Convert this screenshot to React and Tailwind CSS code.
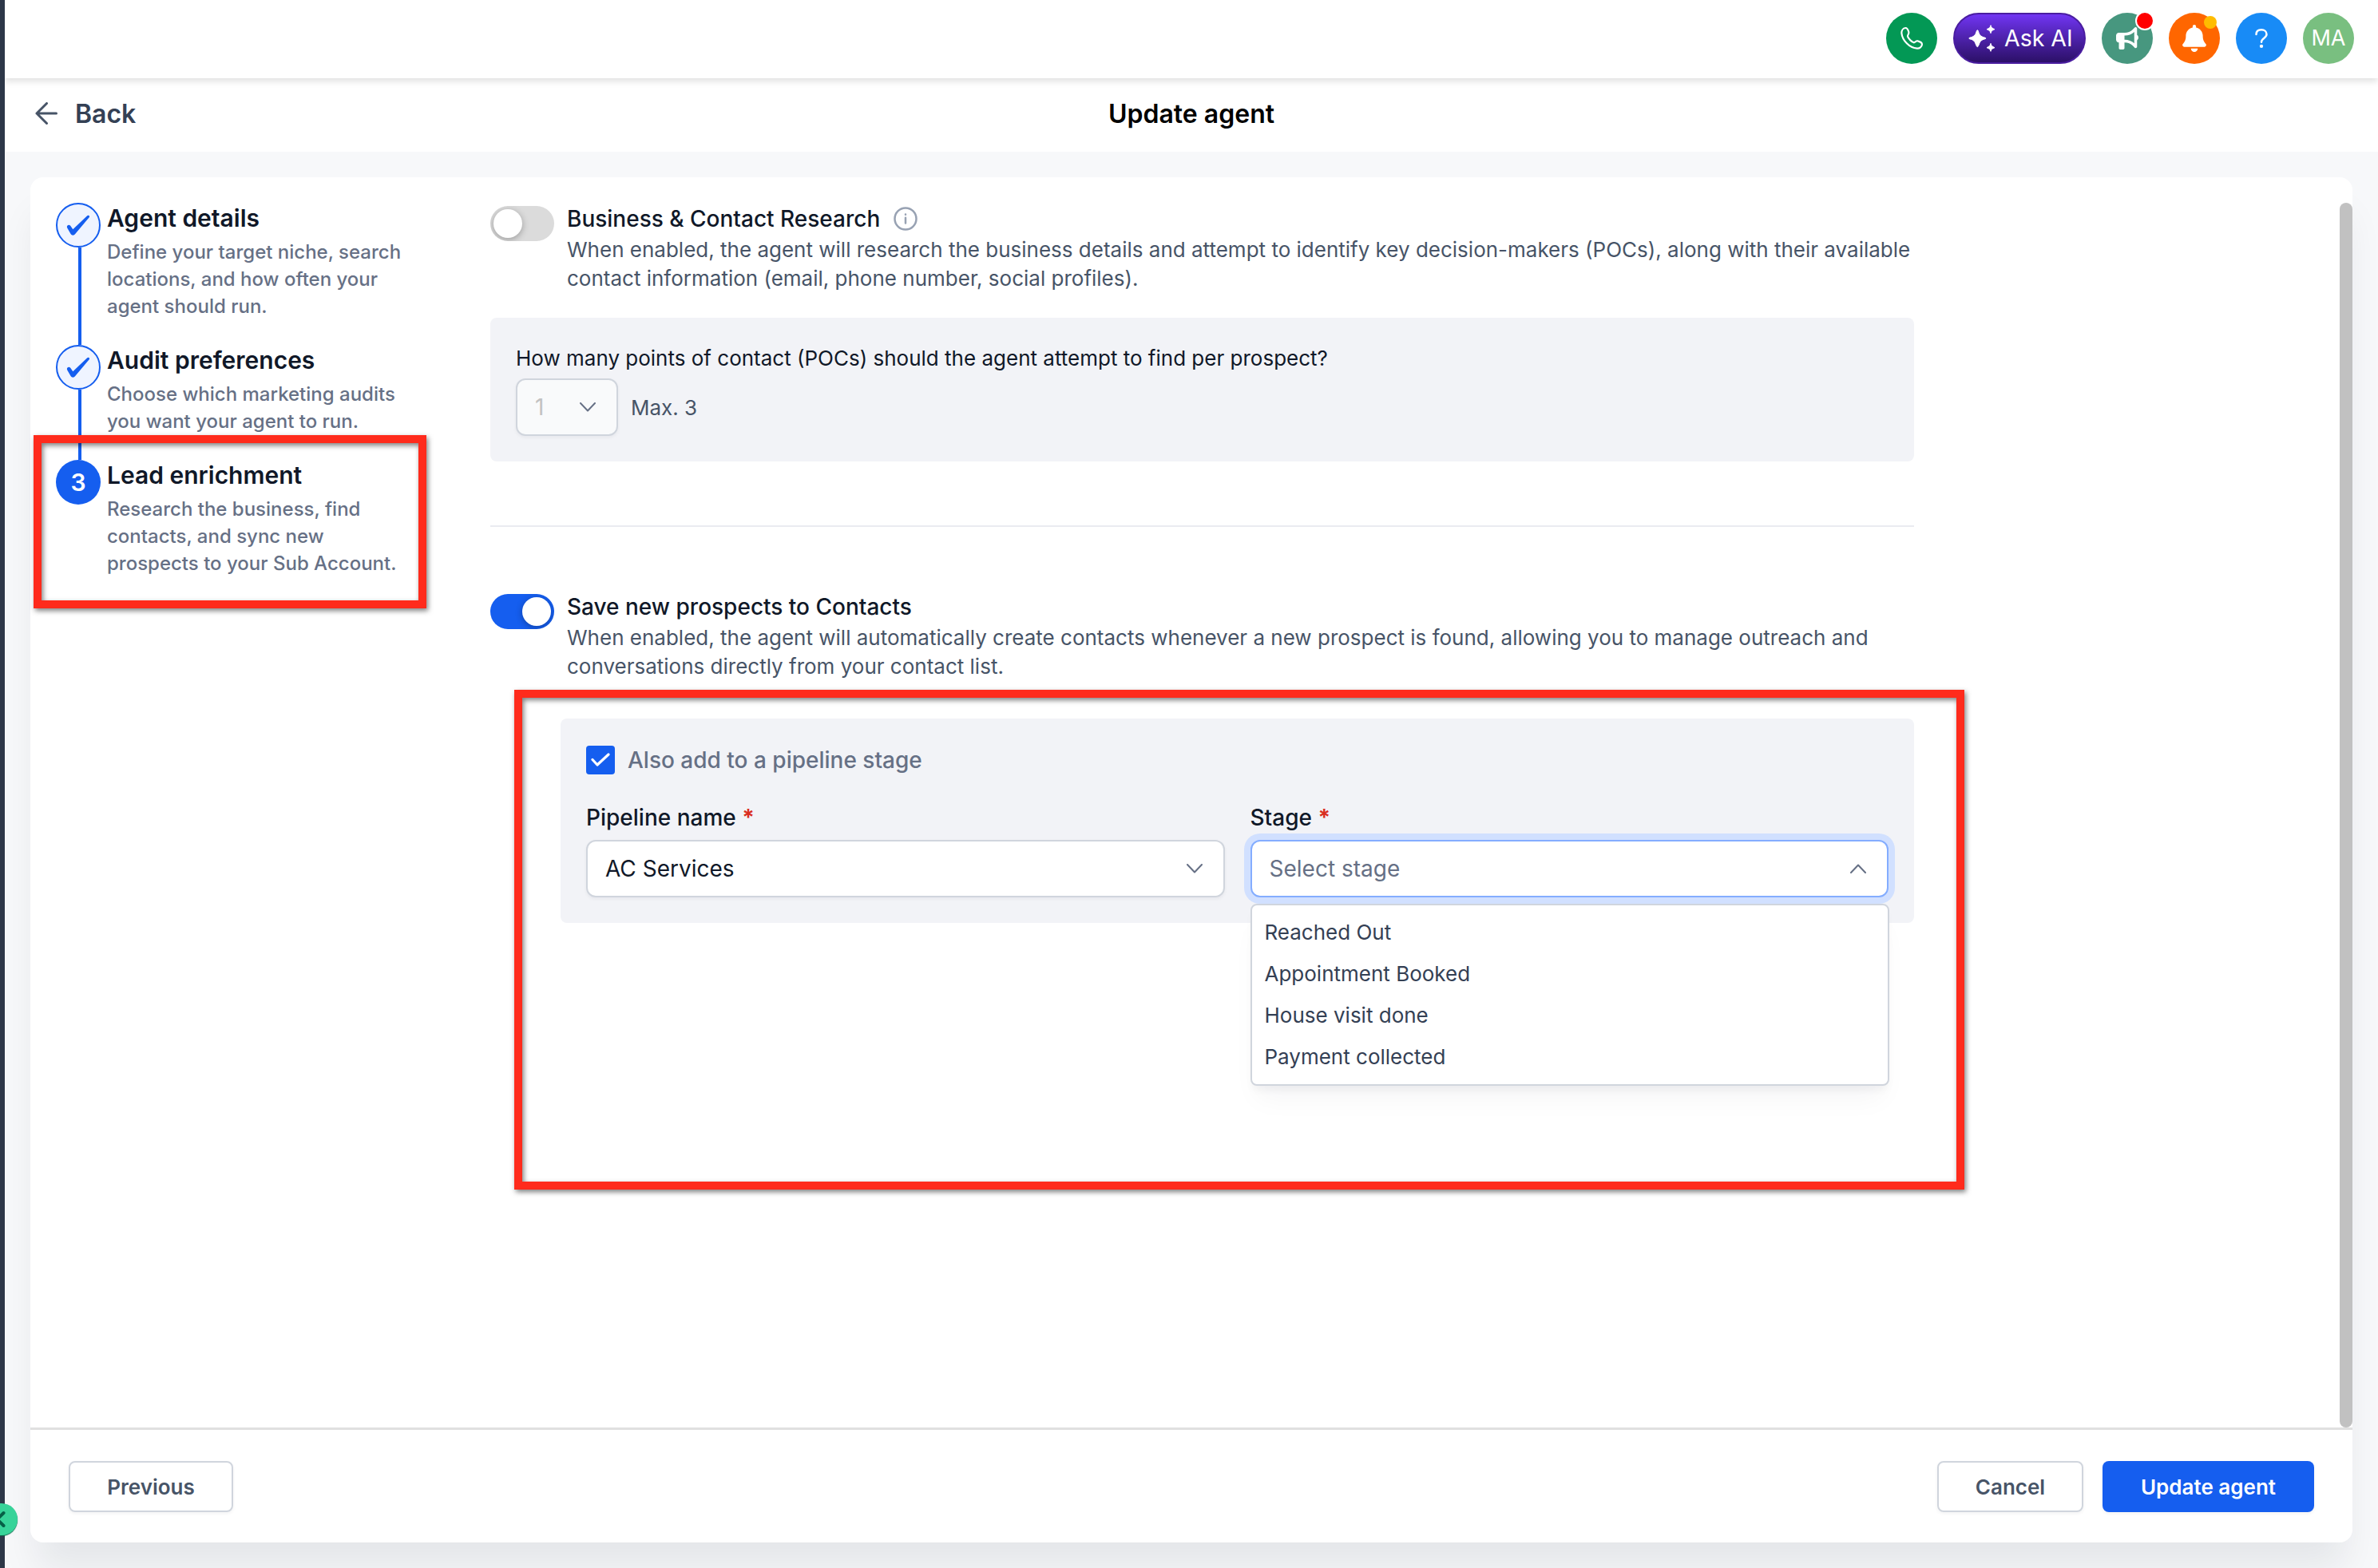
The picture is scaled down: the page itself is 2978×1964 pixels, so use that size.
import { useState } from 'react';
import { FaBell, FaBullhorn } from 'react-icons/fa6';

const steps = [
    {
        title: 'Agent details',
        description: 'Define your target niche, search locations, and how often your agent should run.',
    },
    {
        title: 'Audit preferences',
        description: 'Choose which marketing audits you want your agent to run.',
    },
    {
        title: 'Lead enrichment',
        description: 'Research the business, find contacts, and sync new prospects to your Sub Account.',
    },
];

const stages = ['Reached Out', 'Appointment Booked', 'House visit done', 'Payment collected'];

const PhoneIcon = () => (
    <svg viewBox="36 48 192 192" className="size-16" fill="none" stroke="white" strokeWidth="6.5" strokeLinejoin="round">
        <path d="M108 105C100 106 94 114 94 124C97 152 124 180 152 182C162 183 170 176 171 167C171 160 163 156 155 154C148 152 146 160 140 160C133 158 120 146 117 137C116 131 123 128 121 120C118 110 114 104 108 105Z" />
    </svg>
);

const SparklesIcon = () => (
    <svg viewBox="0 0 102 102" className="h-[34px] w-[34px]" fill="white" stroke="white" strokeWidth="3" strokeLinejoin="round">
        <path d="M34 20C36 20 37 23 38 27C41 37 44 41 54 46C60 48 66 49 66 51C66 53 60 54 54 56C44 61 43 66 39 76C37 81 36 83 34 83C32 83 31 81 29 76C25 66 24 61 14 56C8 54 2 53 2 51C2 49 8 48 14 46C24 41 27 37 30 27C31 23 32 20 34 20Z" />
        <path d="M84 2C85 9 90 14 99 17C90 20 85 24 84 32C83 24 78 20 69 17C78 14 83 9 84 2Z" />
        <path d="M84 70C85 78 90 82 99 86C90 89 85 93 84 100C83 93 78 89 69 86C78 82 83 78 84 70Z" />
    </svg>
);

const QuestionIcon = () => (
    <svg viewBox="0 0 48 72" className="h-6 w-4" fill="none" stroke="white" strokeWidth="7.5" strokeLinecap="round">
        <path d="M4.500 21C4.500 10 12.500 3.800 24 3.800C35.500 3.800 43.500 10.500 43.500 21C43.500 35 24 35 24 50" />
        <circle cx="24" cy="65.500" r="6.500" fill="white" stroke="none" />
    </svg>
);

const Chevron = ({ up }) => (
    <svg viewBox="0 0 20 12" className={up ? 'h-3 w-5 rotate-180' : 'h-3 w-5'} fill="none" stroke="#667085" strokeWidth="2" strokeLinecap="round" strokeLinejoin="round">
        <path d="M1 1L10 10.500L19 1" />
    </svg>
);

const Toggle = ({ on, onClick }) => (
    <button
        type="button"
        onClick={onClick}
        className={`flex h-11 w-20 shrink-0 items-center overflow-hidden rounded-full p-1 ${on ? 'justify-end bg-[#155eef]' : 'justify-start bg-[#dbdbdb]'}`}
    >
        <span className="size-9 rounded-full bg-white shadow-[0_2px_8px_rgba(0,0,0,0.3)]" />
    </button>
);

const TopBar = () => (
    <header className="relative z-10 flex h-[98px] shrink-0 items-start justify-end gap-5 bg-white pt-4 pr-[30px] shadow-[0_4px_8px_rgba(0,0,0,0.12)]">
        <div className="size-16 rounded-full bg-[#039855]">
            <PhoneIcon />
        </div>
        <div className="flex h-16 w-[166px] items-center rounded-full border-2 border-[#4a1da0] bg-gradient-to-b from-[#7135f3] to-[#2c1068] pl-[17px] text-[28.5px] text-white">
            <SparklesIcon />
            <span className="ml-[11px] whitespace-nowrap">Ask AI</span>
        </div>
        <div className="relative flex size-16 items-center justify-center rounded-full bg-[#47977f] text-white">
            <FaBullhorn size={28} />
            <span className="absolute top-0 right-0 size-5 rounded-full bg-[#ff0000] ring-2 ring-white" />
        </div>
        <div className="relative flex size-16 items-center justify-center rounded-full bg-[#ff6600] text-white">
            <FaBell size={34} />
            <span className="absolute top-1 right-1 size-4 rounded-full bg-[#ffbc00]" />
        </div>
        <div className="flex size-16 items-center justify-center rounded-full bg-[#188bf6]">
            <QuestionIcon />
        </div>
        <div className="flex size-16 items-center justify-center rounded-full bg-[#79bf80] text-[27px] text-white">MA</div>
    </header>
);

const StepMarker = ({ done, number }) => {
    if (!done) {
        return (
            <div className="flex size-14 items-center justify-center rounded-full bg-[#155eef] text-[30px] font-semibold text-white">
                {number}
            </div>
        );
    }
    return (
        <div className="flex size-14 items-center justify-center rounded-full border-2 border-[#155eef] bg-[#eff4ff]">
            <svg viewBox="0 0 30 26" className="h-[26px] w-[30px]" fill="#155eef">
                <path d="M26.200 1.300C27.400 -0.100 29.800 1.300 28.900 3L11 24.300C9.900 26.200 6.700 26.200 5.700 24.300L1.200 16.400C-0.200 13.600 3.200 11.600 5.200 13.800L8.300 18.200Z" />
            </svg>
        </div>
    );
};

const Stepper = ({ current }) => (
    <div className="flex w-[544px] shrink-0 flex-col">
        {steps.map((step, i) => (
            <div key={step.title} className="relative flex gap-2">
                <div className="flex w-14 flex-col items-center">
                    <StepMarker done={i < current} number={i + 1} />
                    {i < steps.length - 1 && <div className="ml-1 w-1 grow bg-[#155eef]" />}
                </div>
                <div className="w-[374px] pb-[31px]">
                    <h3 className="text-[30px] leading-[38px] font-semibold text-[#101828]">{step.title}</h3>
                    <p className="mt-[7px] text-2xl leading-[34px] font-medium text-[#667085]">{step.description}</p>
                </div>
                {i === current && (
                    <div className="absolute -top-[31px] -left-7 h-[217px] w-[492px] border-[10px] border-[#ff2b1c] drop-shadow-[2px_3px_3px_rgba(0,0,0,0.5)]" />
                )}
            </div>
        ))}
    </div>
);

const SettingRow = ({ on, onToggle, title, info, children }) => (
    <div className="flex items-start gap-4">
        <Toggle on={on} onClick={onToggle} />
        <div className="-mt-0.5">
            <div className="flex h-9 items-center gap-[17px] text-[28px] leading-9 font-medium text-[#101828]">
                {title}
                {info && (
                    <svg viewBox="0 0 30 30" className="size-[30px]" fill="none" stroke="#98a2b3" strokeWidth="2.500" strokeLinecap="round">
                        <circle cx="15" cy="15" r="13.500" />
                        <path d="M15 13.800V20.500M15 9.600V9.700" />
                    </svg>
                )}
            </div>
            <p className="mt-[3px] text-[26px] leading-9 text-[#475467]">{children}</p>
        </div>
    </div>
);

const FieldLabel = ({ children }) => (
    <label className="block text-[28px] leading-10 font-medium text-[#101828]">
        {children} <span className="font-bold text-[#d92d20]">*</span>
    </label>
);

const App = () => {
    const [research, setResearch] = useState(false);
    const [saveContacts, setSaveContacts] = useState(true);

    return (
        <div className="flex h-[1964px] w-[2978px] overflow-hidden bg-[#f7f8fa] font-[Inter,sans-serif]">
            {/* Collapsed sidebar */}
            <aside className="relative z-20 w-1.5 shrink-0 bg-[#2d3748]">
                <div className="absolute top-[1883px] -left-[18px] size-10 rounded-full bg-[#37d399] shadow-[0_1px_1px_#0b6b4c]">
                    <svg viewBox="0 0 40 40" className="size-10" fill="none" stroke="#065f46" strokeWidth="4" strokeLinecap="round" strokeLinejoin="round">
                        <path d="M22.500 12L14.500 20L22.500 28" />
                    </svg>
                </div>
            </aside>

            <div className="flex grow flex-col">
                <TopBar />

                <div className="grid h-[92px] shrink-0 grid-cols-3 items-center bg-white pb-0.5 text-[32px] font-semibold">
                    <button type="button" className="flex items-center gap-[22px] pl-[38px] text-[#344054]">
                        <svg viewBox="0 0 28 28" className="size-7 -translate-y-px" fill="none" stroke="#475467" strokeWidth="3" strokeLinecap="round" strokeLinejoin="round">
                            <path d="M26.500 14H2M14.500 1.500L2 14L14.500 26.500" />
                        </svg>
                        Back
                    </button>
                    <h1 className="text-center text-black">Update agent</h1>
                </div>

                <main className="mx-8 mt-8 flex h-[1710px] flex-col rounded-2xl bg-white shadow-[0_40px_48px_-8px_rgba(16,24,40,0.08)]">
                    <div className="flex grow pt-8 pl-8">
                        <Stepper current={2} />

                        <section className="w-[1783px] pt-1">
                            <SettingRow on={research} onToggle={() => setResearch(!research)} title="Business & Contact Research" info>
                                When enabled, the agent will research the business details and attempt to identify key decision-makers (POCs), along with their available
                                <br />
                                contact information (email, phone number, social profiles).
                            </SettingRow>

                            <div className="mt-[31px] h-[180px] rounded-lg bg-[#f2f3f7] px-8 pt-8">
                                <p className="text-[26px] leading-[38px] text-[#101828]">
                                    How many points of contact (POCs) should the agent attempt to find per prospect?
                                </p>
                                <div className="mt-1.5 flex items-center gap-4">
                                    <div className="flex h-[72px] w-32 items-center justify-between rounded-xl border-2 border-[#d0d5dd] bg-[#f9fafb] pr-[26px] pl-[22px] text-[28px] text-[#c2c2c2] shadow-[0_2px_4px_rgba(16,24,40,0.05)]">
                                        1
                                        <Chevron />
                                    </div>
                                    <span className="text-[26px] text-[#475467]">Max. 3</span>
                                </div>
                            </div>

                            <hr className="mt-20 border-t-2 border-[#eaebf0]" />

                            <div className="mt-[84px]">
                                <SettingRow on={saveContacts} onToggle={() => setSaveContacts(!saveContacts)} title="Save new prospects to Contacts">
                                    When enabled, the agent will automatically create contacts whenever a new prospect is found, allowing you to manage outreach and
                                    <br />
                                    conversations directly from your contact list.
                                </SettingRow>
                            </div>

                            <div className="relative mt-[47px] ml-[88px] h-64 rounded-lg bg-[#f2f3f7] px-8 pt-[34px]">
                                <div className="flex items-center gap-4">
                                    <span className="flex size-9 items-center justify-center rounded bg-[#155eef]">
                                        <svg viewBox="0 0 24 18" className="h-[18px] w-6" fill="none" stroke="white" strokeWidth="3.200" strokeLinecap="round" strokeLinejoin="round">
                                            <path d="M2 8.500L8 15L22 2" />
                                        </svg>
                                    </span>
                                    <span className="text-[28px] leading-9 font-medium text-[#667085]">Also add to a pipeline stage</span>
                                </div>

                                <div className="mt-[34px] grid grid-cols-2 gap-8">
                                    <div>
                                        <FieldLabel>Pipeline name</FieldLabel>
                                        <div className="mt-2 flex h-[72px] items-center justify-between rounded-xl border-2 border-[#d0d5dd] bg-white pr-[26px] pl-[22px] text-[28px] text-[#101828] shadow-[0_2px_4px_rgba(16,24,40,0.05)]">
                                            AC Services
                                            <Chevron />
                                        </div>
                                    </div>
                                    <div className="relative">
                                        <FieldLabel>Stage</FieldLabel>
                                        <div className="mt-2 flex h-[72px] items-center justify-between rounded-xl border-2 border-[#84adff] bg-white pr-[26px] pl-[22px] text-[28px] text-[#667085] ring-8 ring-[#d1e0ff]">
                                            Select stage
                                            <Chevron up />
                                        </div>
                                        <ul className="absolute top-32 left-0 z-10 w-[800px] rounded-lg border-2 border-[#d0d5dd] bg-white py-2 shadow-[0_24px_32px_-8px_rgba(16,24,40,0.04),0_8px_12px_-4px_rgba(16,24,40,0.06)]">
                                            {stages.map((stage) => (
                                                <li key={stage} className="pl-4 text-[26px] leading-[52px] text-[#344054]">{stage}</li>
                                            ))}
                                        </ul>
                                    </div>
                                </div>

                                <div className="absolute -top-9 -left-[58px] h-[626px] w-[1816px] border-[10px] border-[#ff2b1c] drop-shadow-[2px_3px_3px_rgba(0,0,0,0.5)]" />
                            </div>
                        </section>

                        {/* Scrollbar */}
                        <div className="ml-auto w-4 rounded-full bg-[#c1c1c1]" />
                    </div>

                    <footer className="flex h-36 shrink-0 items-center gap-6 border-t-[3px] border-[#e0e0e0] px-12 text-[26px] font-semibold">
                        <button type="button" className="mr-auto h-16 w-[206px] rounded-lg border-2 border-[#d0d5dd] pt-0.5 text-[#475467] shadow-[0_2px_4px_rgba(16,24,40,0.05)]">
                            Previous
                        </button>
                        <button type="button" className="h-16 w-[183px] rounded-lg border-2 border-[#d0d5dd] pt-0.5 text-[#475467] shadow-[0_2px_4px_rgba(16,24,40,0.05)]">
                            Cancel
                        </button>
                        <button type="button" className="h-16 w-[265px] rounded-lg bg-[#155eef] pt-0.5 text-white shadow-[0_2px_4px_rgba(16,24,40,0.05)]">
                            Update agent
                        </button>
                    </footer>
                </main>
            </div>
        </div>
    );
};

export default App;
